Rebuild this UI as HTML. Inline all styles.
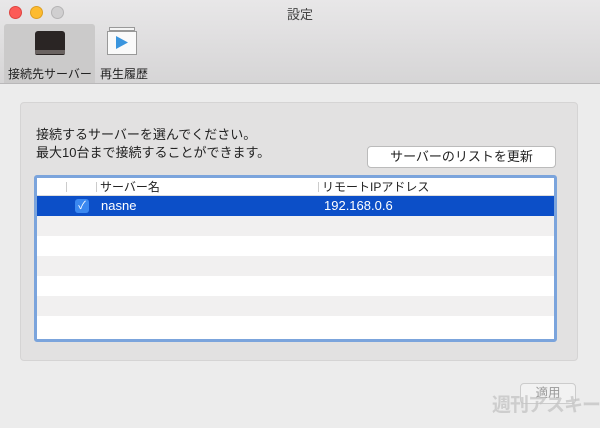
<!DOCTYPE html>
<html><head><meta charset="utf-8"><style>
*{margin:0;padding:0;box-sizing:border-box}
html,body{width:600px;height:428px;overflow:hidden}
body{background:#ececec;font-family:"Liberation Sans","Noto Sans CJK JP",sans-serif;color:#222;position:relative}
.abs{position:absolute;white-space:nowrap}
.tb{left:0;top:0;width:600px;height:84px;background:linear-gradient(#e8e7e8,#d6d5d6);border-bottom:1px solid #b9b8b9}
.dot{width:13px;height:13px;border-radius:50%;top:6px}
.title{top:4px;left:0;width:600px;text-align:center;font-size:13px;color:#444}
.tab1{left:4px;top:24px;width:91px;height:59px;background:#cbcaca;border-radius:3px 3px 0 0}
.tl{font-size:12px;color:#222;top:65px}
.grp{left:20px;top:102px;width:558px;height:259px;background:#e2e1e1;border:1px solid #d5d4d4;border-radius:4px}
.txt{font-size:13px;line-height:18px}
.btn{left:367px;top:146px;width:189px;height:22px;background:#fff;border:1px solid #bbb;border-radius:4px;font-size:13px;text-align:center;line-height:20px}
.tbl{left:34px;top:175px;width:523px;height:167px;border:3px solid #7ba4dc;border-radius:3px;background:#fff;overflow:hidden}
.row{position:absolute;left:0;width:100%;height:20px}
</style></head><body>
<div class="abs tb"></div>
<div class="abs dot" style="left:9px;background:#fc5b57;border:1px solid #de4440"></div>
<div class="abs dot" style="left:30px;background:#fdbb2e;border:1px solid #dd9f22"></div>
<div class="abs dot" style="left:51px;background:#d0cfd0;border:1px solid #b5b4b5"></div>
<div class="abs title">設定</div>
<div class="abs tab1"></div>
<div class="abs" style="left:35px;top:31px;width:30px;height:24px;background:#2a2524;border-radius:3px 3px 2px 2px"></div>
<div class="abs" style="left:35px;top:50px;width:30px;height:4px;background:#6a6361"></div>
<div class="abs" style="left:109px;top:27px;width:26px;height:4px;border:1px solid #999;background:#f4f4f4"></div>
<div class="abs" style="left:107px;top:31px;width:30px;height:24px;border:1px solid #999;background:#fafafa"></div>
<svg class="abs" style="left:114px;top:35px" width="16" height="15"><path d="M2 1 L14 7.5 L2 14Z" fill="#3a95de"/></svg>
<div class="abs tl" style="left:8px">接続先サーバー</div>
<div class="abs tl" style="left:100px">再生履歴</div>
<div class="abs grp"></div>
<div class="abs txt" style="left:36px;top:126px">接続するサーバーを選んでください。<br>最大10台まで接続することができます。</div>
<div class="abs btn">サーバーのリストを更新</div>
<div class="abs tbl">
 <div class="row" style="top:0;height:18px;font-size:12px;line-height:18px;border-bottom:1px solid #ddd">
  <span class="abs" style="left:29px;top:4px;width:1px;height:10px;background:#ccc"></span>
  <span class="abs" style="left:59px;top:4px;width:1px;height:10px;background:#ccc"></span>
  <span class="abs" style="left:63px">サーバー名</span>
  <span class="abs" style="left:281px;top:4px;width:1px;height:10px;background:#ccc"></span>
  <span class="abs" style="left:285px">リモートIPアドレス</span>
 </div>
 <div class="row" style="top:18px;background:#0c4fc8;color:#fff;font-size:13px;line-height:20px">
  <span class="abs" style="left:38px;top:3px;width:14px;height:14px;background:#3b88f0;border-radius:3px;font-size:11px;line-height:14px;text-align:center">✓</span>
  <span class="abs" style="left:64px">nasne</span>
  <span class="abs" style="left:287px">192.168.0.6</span>
 </div>
 <div class="row" style="top:38px;background:#f1f0f0"></div>
 <div class="row" style="top:78px;background:#f1f0f0"></div>
 <div class="row" style="top:118px;background:#f1f0f0"></div>
</div>
<div class="abs" style="left:520px;top:383px;width:56px;height:21px;border:1px solid #ccc;border-radius:4px;background:#f2f2f2;color:#999;font-size:12.5px;text-align:center;line-height:19px">適用</div>
<div class="abs" style="left:492px;top:395px;font-size:19px;line-height:22px;color:rgba(195,195,195,.75);font-weight:bold;letter-spacing:-1px">週刊アスキー</div>
</body></html>
